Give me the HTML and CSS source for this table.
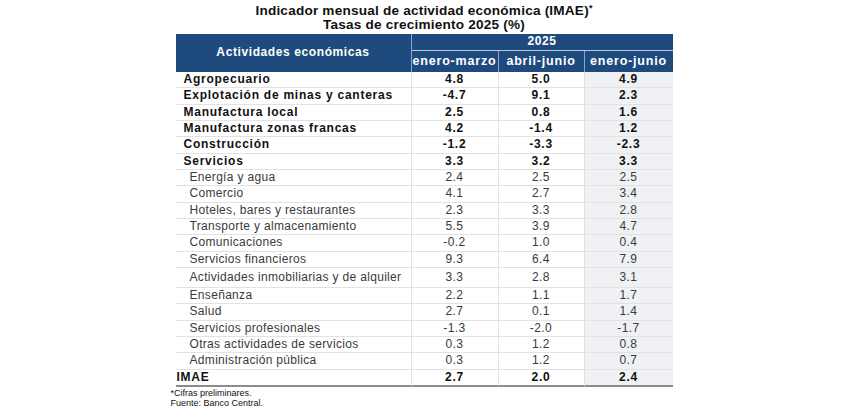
FILE: index.html
```html
<!DOCTYPE html>
<html lang="es">
<head>
<meta charset="utf-8">
<title>IMAE</title>
<link rel="stylesheet" href="styles.css">
</head>
<body>
<div class="wrap">
  <h1 class="title"><span class="tline">Indicador mensual de actividad económica (IMAE)<sup>*</sup></span><span class="tline">Tasas de crecimiento 2025 (%)</span></h1>
  <table class="imae">
    <colgroup>
      <col class="c1"><col class="c2"><col class="c3"><col class="c4">
    </colgroup>
    <thead>
      <tr class="h1">
        <th rowspan="2" class="hact">Actividades económicas</th>
        <th colspan="3" class="hyear">2025</th>
      </tr>
      <tr class="h2">
        <th>enero-marzo</th><th>abril-junio</th><th class="last">enero-junio</th>
      </tr>
    </thead>
    <tbody>
      <tr class="b"><td>Agropecuario</td><td>4.8</td><td>5.0</td><td>4.9</td></tr>
      <tr class="b"><td>Explotación de minas y canteras</td><td>-4.7</td><td>9.1</td><td>2.3</td></tr>
      <tr class="b"><td>Manufactura local</td><td>2.5</td><td>0.8</td><td>1.6</td></tr>
      <tr class="b"><td>Manufactura zonas francas</td><td>4.2</td><td>-1.4</td><td>1.2</td></tr>
      <tr class="b"><td>Construcción</td><td>-1.2</td><td>-3.3</td><td>-2.3</td></tr>
      <tr class="b"><td>Servicios</td><td>3.3</td><td>3.2</td><td>3.3</td></tr>
      <tr class="s"><td>Energía y agua</td><td>2.4</td><td>2.5</td><td>2.5</td></tr>
      <tr class="s"><td>Comercio</td><td>4.1</td><td>2.7</td><td>3.4</td></tr>
      <tr class="s"><td>Hoteles, bares y restaurantes</td><td>2.3</td><td>3.3</td><td>2.8</td></tr>
      <tr class="s"><td>Transporte y almacenamiento</td><td>5.5</td><td>3.9</td><td>4.7</td></tr>
      <tr class="s"><td>Comunicaciones</td><td>-0.2</td><td>1.0</td><td>0.4</td></tr>
      <tr class="s"><td>Servicios financieros</td><td>9.3</td><td>6.4</td><td>7.9</td></tr>
      <tr class="s tall"><td>Actividades inmobiliarias y de alquiler</td><td>3.3</td><td>2.8</td><td>3.1</td></tr>
      <tr class="s"><td>Enseñanza</td><td>2.2</td><td>1.1</td><td>1.7</td></tr>
      <tr class="s"><td>Salud</td><td>2.7</td><td>0.1</td><td>1.4</td></tr>
      <tr class="s"><td>Servicios profesionales</td><td>-1.3</td><td>-2.0</td><td>-1.7</td></tr>
      <tr class="s"><td>Otras actividades de servicios</td><td>0.3</td><td>1.2</td><td>0.8</td></tr>
      <tr class="s"><td>Administración pública</td><td>0.3</td><td>1.2</td><td>0.7</td></tr>
      <tr class="b total"><td>IMAE</td><td>2.7</td><td>2.0</td><td>2.4</td></tr>
    </tbody>
  </table>
  <p class="note">*Cifras preliminares.<br>Fuente: Banco Central.</p>
</div>
</body>
</html>
```
FILE: styles.css
```css
html, body {
  margin: 0;
  padding: 0;
  background: #ffffff;
}

body {
  font-family: "Liberation Sans", Arial, sans-serif;
  color: #111;
}

.wrap {
  width: 497px;
  margin: 0 auto;
}

.title {
  margin: 0 -40px;
  padding-top: 4px;
  height: 30px;
  font-size: 13.6px;
  font-weight: bold;
  text-align: center;
  color: #111;
  white-space: nowrap;
  letter-spacing: 0.2px;
}

.tline {
  display: block;
  height: 14px;
  line-height: 14px;
}

.title sup {
  font-size: 9px;
  line-height: 0;
  vertical-align: 4px;
}

.imae {
  width: 497px;
  border-collapse: separate;
  border-spacing: 0;
  table-layout: fixed;
  font-size: 12px;
}

.c1 { width: 236px; }
.c2 { width: 87px; }
.c3 { width: 86px; }
.c4 { width: 88px; }

.imae th {
  background: #1f4a7e;
  color: #ffffff;
  font-weight: bold;
  padding: 0;
  letter-spacing: 0.6px;
}

.hact {
  height: 36px;
  text-align: center;
  border-right: 1px solid #8fa4c0;
  font-size: 12px;
  padding-bottom: 2px !important;
}

.h1 th.hyear {
  height: 15px;
  line-height: 15px;
  border-bottom: 1px solid #b9c6d8;
  font-size: 12px;
}

.h2 th {
  height: 20px;
  line-height: 20px;
  font-size: 12.5px;
  border-right: 1px solid #8fa4c0;
  letter-spacing: 0.8px;
}

.h2 th.last {
  border-right: none;
}

.imae td {
  padding: 0;
  height: 15.33px;
  line-height: 15.33px;
  border-bottom: 1px solid #e2e2e2;
  border-right: 1px solid #e2e2e2;
  text-align: center;
  white-space: nowrap;
  letter-spacing: 0.4px;
}

.imae td:first-child {
  text-align: left;
}

.imae td:last-child {
  background: #eff1f4;
  border-right: none;
}

.b td {
  font-weight: bold;
  color: #111;
  letter-spacing: 0.75px;
}

.b td:first-child {
  padding-left: 8px;
}

.s td {
  color: #3a3a3a;
}

.s td:first-child {
  padding-left: 14px;
  letter-spacing: 0.32px;
}

.tall td {
  height: 19px;
  line-height: 19px;
}

.total td {
  border-bottom: 2px solid #8c8c8c;
  height: 15px;
  line-height: 15px;
}

.total td:first-child {
  padding-left: 1px;
}

.note {
  margin: 1px 0 0 -5px;
  font-size: 9px;
  line-height: 10px;
  color: #111;
}
```
